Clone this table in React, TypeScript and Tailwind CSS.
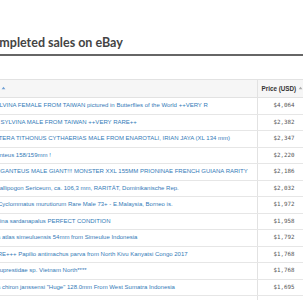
const sales = [
  { title: "PAPILIO SYLVINA FEMALE FROM TAIWAN pictured in Butterflies of the World ++VERY R", price: "$4,064" },
  { title: "A1 PAPILIO SYLVINA MALE FROM TAIWAN ++VERY RARE++", price: "$2,382" },
  { title: "ORNITHOPTERA TITHONUS CYTHAERIAS MALE FROM ENAROTALI, IRIAN JAYA (XL 134 mm)", price: "$2,347" },
  { title: "Titanus giganteus 158/159mm !", price: "$2,220" },
  { title: "TITANUS GIGANTEUS MALE GIANT!!! MONSTER XXL 155MM PRIONINAE FRENCH GUIANA RARITY", price: "$2,186" },
  { title: "Bockkäfer Callipogon Sericeum, ca. 106,3 mm, RARITÄT, Dominikanische Rep.", price: "$2,032" },
  { title: "Lucanidae: Cyclommatus murutiorum Rare Male 73+ - E.Malaysia, Borneo is.", price: "$1,972" },
  { title: "Agrias claudina sardanapalus PERFECT CONDITION", price: "$1,958" },
  { title: "Chalcosoma atlas simeuluensis 54mm from Simeulue Indonesia", price: "$1,792" },
  { title: "SUPER RARE+++ Papilio antimachus parva from North Kivu Kanyatsi Congo 2017", price: "$1,768" },
  { title: "Big Green Buprestidae sp. Vietnam North****", price: "$1,768" },
  { title: 'Chalcosoma chiron janssensi "Huge" 128.0mm From West Sumatra Indonesia', price: "$1,695" },
  { title: "Goliathus regius XXL male from Ghana", price: "$1,650" },
];

function SortIcon({ className }: { className?: string }) {
  return (
    <svg viewBox="0 0 8 8" className={className}>
      <path d="M4 1 L7 5 L1 5 Z" fill="currentColor" />
    </svg>
  );
}

export default function App() {
  return (
    <div className="w-[303px] h-[300px] overflow-hidden bg-white">
      <div className="ml-[-37.5px] w-[365px]">
        {/* Heading */}
        <h2 className="ml-[21.5px] pt-[35px] pb-[4px] leading-[15px] text-[12.5px] font-bold text-[#444] font-['Lato',sans-serif] border-b-2 border-[#666]">
          Completed sales on eBay
        </h2>

        {/* Table */}
        <div className="mt-[23px] font-['Liberation_Sans',Arial,sans-serif] text-[6px]">
          <div className="grid grid-cols-[295.5px_52px] h-[19px] bg-[#f6f6f6] border-y border-[#e2e2e2] font-bold text-[#333]">
            <div className="flex items-center gap-[2px] px-[4.5px] border-r border-[#e2e2e2]">
              <span>Listing title</span>
              <SortIcon className="w-[5px] h-[5px] text-[#6f9fd4]" />
            </div>
            <div className="flex items-center gap-[2px] pl-[3.5px] whitespace-nowrap text-[6.3px]">
              <span>Price (USD)</span>
              <SortIcon className="w-[5px] h-[5px] text-[#aaa]" />
            </div>
          </div>

          {sales.map((s, i) => (
            <div key={i} className="grid grid-cols-[295.5px_52px] h-[16.5px] border-b border-[#e6e6e6]">
              <div className="flex items-center px-[4.5px] border-r border-[#e2e2e2] overflow-hidden whitespace-nowrap text-[#337ab7]">
                {s.title}
              </div>
              <div className="flex items-center justify-center font-['DejaVu_Sans_Mono',monospace] text-[5.8px] text-[#555]">
                {s.price}
              </div>
            </div>
          ))}
        </div>
      </div>
    </div>
  );
}
